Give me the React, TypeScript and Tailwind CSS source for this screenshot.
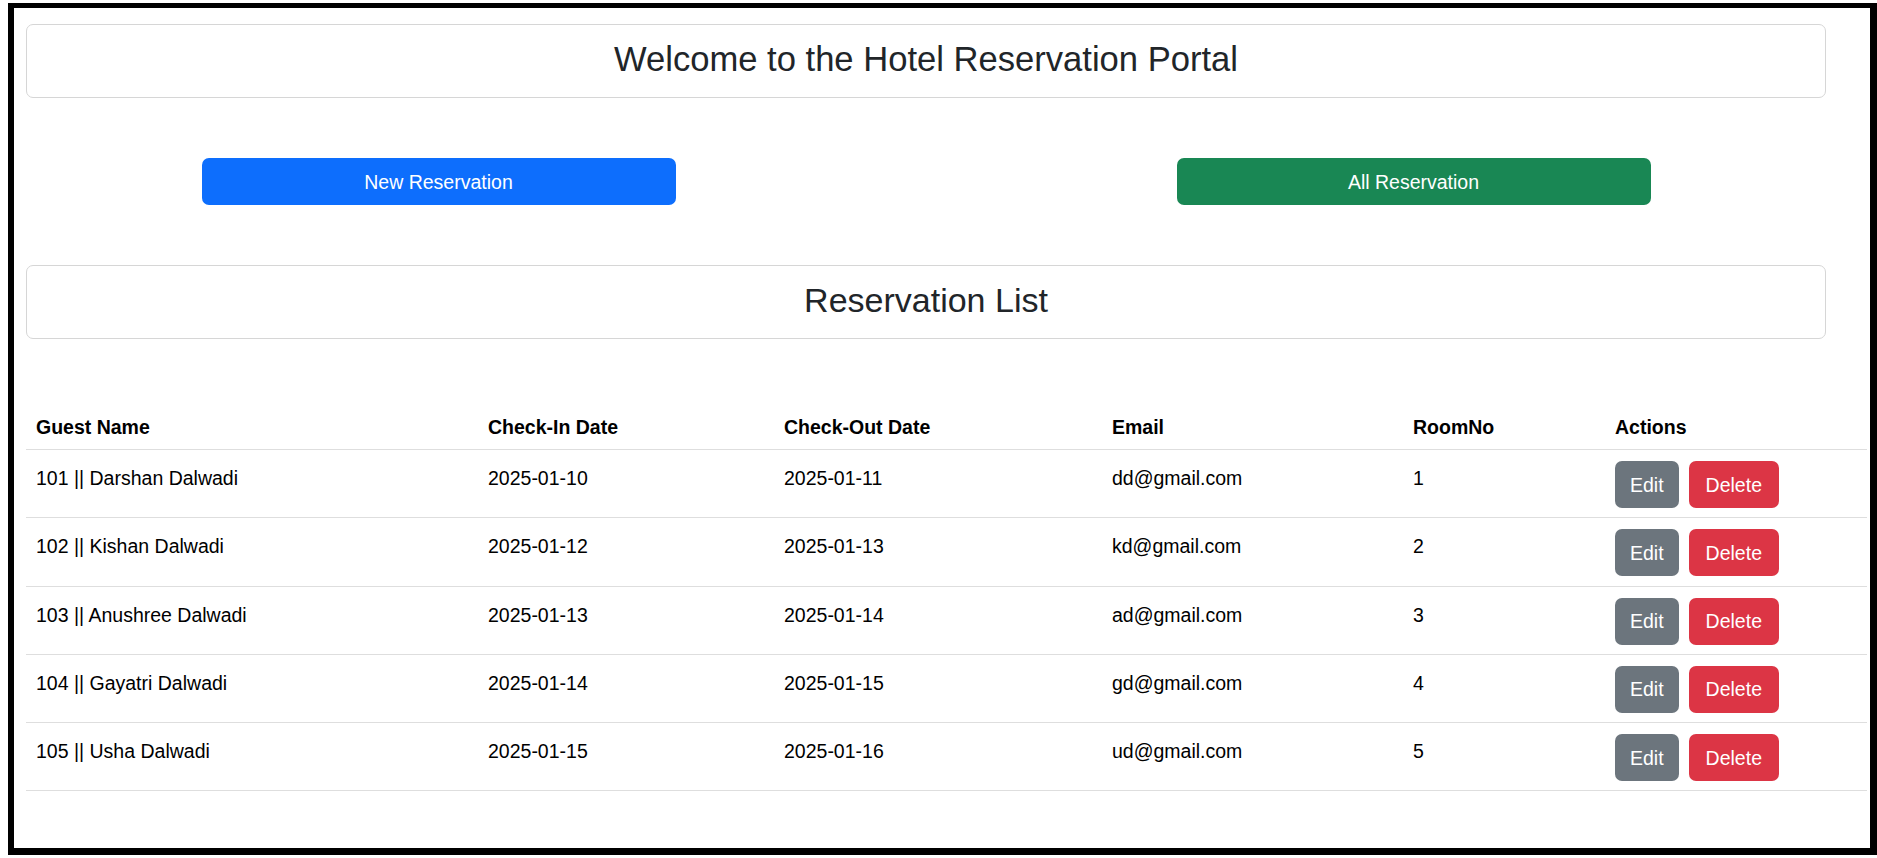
import React from 'react'

type Reservation = {
  id: number
  guestName: string
  checkIn: string
  checkOut: string
  email: string
  roomNo: number
}

const reservations: Reservation[] = [
  { id: 101, guestName: 'Darshan Dalwadi', checkIn: '2025-01-10', checkOut: '2025-01-11', email: 'dd@gmail.com', roomNo: 1 },
  { id: 102, guestName: 'Kishan Dalwadi', checkIn: '2025-01-12', checkOut: '2025-01-13', email: 'kd@gmail.com', roomNo: 2 },
  { id: 103, guestName: 'Anushree Dalwadi', checkIn: '2025-01-13', checkOut: '2025-01-14', email: 'ad@gmail.com', roomNo: 3 },
  { id: 104, guestName: 'Gayatri Dalwadi', checkIn: '2025-01-14', checkOut: '2025-01-15', email: 'gd@gmail.com', roomNo: 4 },
  { id: 105, guestName: 'Usha Dalwadi', checkIn: '2025-01-15', checkOut: '2025-01-16', email: 'ud@gmail.com', roomNo: 5 },
]

function TitleCard({ title, size }: { title: string; size: 'lg' | 'md' }) {
  return (
    <div className="w-[1800px] h-[74px] border border-[#d6d6d6] rounded-[7px] flex items-center justify-center pb-[4px]">
      <h2 className={`${size === 'lg' ? 'text-[34.6px]' : 'text-[34px]'} font-normal text-[#212529] leading-[40px]`}>{title}</h2>
    </div>
  )
}

export default function App() {
  const td = 'px-[10px] pt-[13px] pb-[10px] align-top border-b border-[#dedede] text-black'

  return (
    <div className="min-h-screen bg-white pt-[3px] pl-[8px] font-['Liberation_Sans',Arial,sans-serif] text-[19.5px] leading-[30px]">
      <div className="w-[1869px] h-[852px] border-l-[6px] border-t-[5px] border-r-[7px] border-b-[7px] border-black overflow-hidden">
        <div className="pl-[12px] pt-[16px]">
          {/* Header */}
          <TitleCard title="Welcome to the Hotel Reservation Portal" size="lg" />

          {/* Actions */}
          <div className="w-[1800px] mt-[60px] grid grid-cols-2 gap-[150px]">
            <div className="flex justify-center">
              <button className="w-[474px] h-[47px] rounded-[7px] bg-[#0d6efd] text-white">New Reservation</button>
            </div>
            <div className="flex justify-center">
              <button className="w-[474px] h-[47px] rounded-[7px] bg-[#198754] text-white">All Reservation</button>
            </div>
          </div>

          <div className="mt-[60px]">
            <TitleCard title="Reservation List" size="md" />
          </div>

          {/* Table */}
          <table className="mt-[60px] w-[1841px] table-fixed border-collapse text-left">
            <colgroup>
              <col className="w-[452px]" />
              <col className="w-[296px]" />
              <col className="w-[328px]" />
              <col className="w-[301px]" />
              <col className="w-[202px]" />
              <col className="w-[262px]" />
            </colgroup>
            <thead>
              <tr>
                {['Guest Name', 'Check-In Date', 'Check-Out Date', 'Email', 'RoomNo', 'Actions'].map((h) => (
                  <th key={h} className="px-[10px] pt-[13px] pb-[7px] font-bold text-black border-b border-[#dedede]">
                    {h}
                  </th>
                ))}
              </tr>
            </thead>
            <tbody>
              {reservations.map((r) => (
                <tr key={r.id}>
                  <td className={td}>{r.id} || {r.guestName}</td>
                  <td className={td}>{r.checkIn}</td>
                  <td className={td}>{r.checkOut}</td>
                  <td className={td}>{r.email}</td>
                  <td className={td}>{r.roomNo}</td>
                  <td className="px-[10px] pt-[11px] pb-[9.25px] align-top border-b border-[#dedede]">
                    <div className="flex gap-[10px]">
                      <button className="h-[47px] px-[15px] rounded-[7px] bg-[#6c757d] text-white">Edit</button>
                      <button className="h-[47px] px-[17px] rounded-[7px] bg-[#dc3545] text-white">Delete</button>
                    </div>
                  </td>
                </tr>
              ))}
            </tbody>
          </table>
        </div>
      </div>
    </div>
  )
}
